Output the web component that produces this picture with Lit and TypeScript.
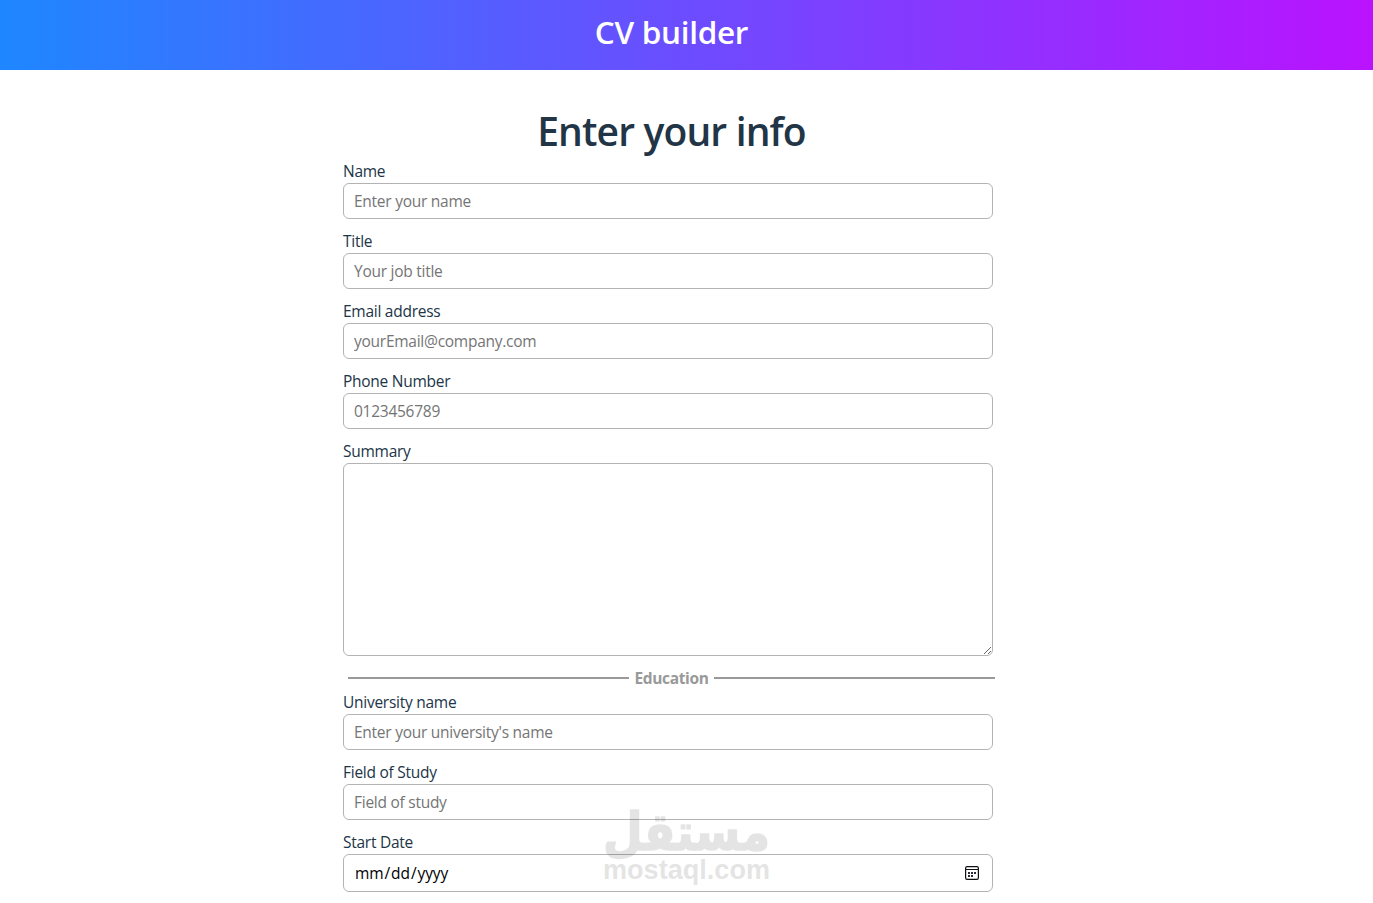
import { LitElement, html, css, nothing } from 'lit';
import { customElement, property } from 'lit/decorators.js';

interface Field {
  label: string;
  type: 'text' | 'email' | 'tel' | 'date' | 'textarea';
  placeholder?: string;
}

const PERSONAL: Field[] = [
  { label: 'Name', type: 'text', placeholder: 'Enter your name' },
  { label: 'Title', type: 'text', placeholder: 'Your job title' },
  { label: 'Email address', type: 'email', placeholder: 'yourEmail@company.com' },
  { label: 'Phone Number', type: 'tel', placeholder: '0123456789' },
  { label: 'Summary', type: 'textarea' },
];

const EDUCATION: Field[] = [
  { label: 'University name', type: 'text', placeholder: "Enter your university's name" },
  { label: 'Field of Study', type: 'text', placeholder: 'Field of study' },
  { label: 'Start Date', type: 'date' },
];

const calendarIcon = html`
  <svg class="calendar" width="14" height="14" viewBox="0 0 14 14">
    <rect x="0.6" y="0.6" width="12.8" height="12.8" rx="1.6" fill="none" stroke="#101014" stroke-width="1.2" />
    <path d="M1 3.5H13" stroke="#101014" />
    <path d="M3 6h2v2H3zM6 6h2v2H6zM9 6h2v2H9zM3 9h2v2H3zM6 9h2v2H6z" fill="#2b2b38" />
  </svg>
`;

@customElement('cv-field')
export class CvField extends LitElement {
  static styles = css`
    :host {
      display: block;
      margin-bottom: 10px;
    }
    label {
      display: block;
      height: 24px;
      line-height: 25px;
    }
    .box {
      position: relative;
      width: 650px;
    }
    .control {
      display: block;
      box-sizing: border-box;
      width: 650px;
      height: 36px;
      padding: 0 10px;
      border: 1px solid #b3b3b3;
      border-radius: 6px;
      background: #fff;
      color: #000;
      font: inherit;
      letter-spacing: inherit;
      outline: none;
    }
    .control::placeholder {
      color: #757575;
    }
    .date {
      height: 38px;
      letter-spacing: -0.1px;
    }
    .date::-webkit-calendar-picker-indicator {
      opacity: 0;
    }
    .calendar {
      position: absolute;
      right: 14px;
      top: 12px;
      pointer-events: none;
    }
    .area {
      height: 193px;
      resize: both;
    }
  `;

  @property({ attribute: false }) field!: Field;

  private _renderControl() {
    const { type, placeholder } = this.field;
    if (type === 'textarea') {
      return html`<textarea id="control" class="control area"></textarea>`;
    }
    return html`
      <input
        id="control"
        class="control ${type === 'date' ? 'date' : ''}"
        type=${type}
        placeholder=${placeholder ?? nothing}
      />
      ${type === 'date' ? calendarIcon : nothing}
    `;
  }

  protected render() {
    return html`
      <label for="control">${this.field.label}</label>
      <div class="box">${this._renderControl()}</div>
    `;
  }
}

@customElement('app-root')
export class AppRoot extends LitElement {
  static styles = css`
    :host {
      display: block;
      position: relative;
      height: 903px;
      overflow: hidden;
      background: #fff;
      color: #213547;
      font: 15.5px/24px 'Open Sans', 'Noto Sans', sans-serif;
      letter-spacing: -0.26px;
    }
    header {
      box-sizing: border-box;
      height: 70px;
      padding: 8px 30px 0 0;
      background: linear-gradient(90deg, #1e87ff, #ba12ff);
      color: #fff;
      text-align: center;
    }
    h1,
    h2 {
      margin: 0;
      font-weight: 600;
    }
    h1 {
      font-size: 31.5px;
      line-height: 48px;
      letter-spacing: -0.3px;
    }
    main {
      padding: 36px 30px 0 0;
    }
    h2 {
      font-size: 39px;
      line-height: 49px;
      letter-spacing: -0.85px;
      text-align: center;
    }
    form {
      width: 657px;
      margin: 4px auto 0;
    }
    .divider {
      display: flex;
      align-items: center;
      gap: 5px;
      height: 24px;
      padding: 0 5px;
      color: #999;
      font-weight: 700;
      letter-spacing: -0.35px;
    }
    .divider::before,
    .divider::after {
      content: '';
      flex: 1;
      height: 2px;
      background: #999;
    }
    .watermark {
      position: absolute;
      left: 600px;
      top: 785px;
      overflow: visible;
      pointer-events: none;
      opacity: 0.1;
    }
    .wordmark {
      font: 700 52px 'DejaVu Sans', sans-serif;
      letter-spacing: 0;
      stroke: #000;
      stroke-width: 1.6;
      stroke-linejoin: round;
    }
    .domain {
      font: 700 27px 'Liberation Sans', sans-serif;
      letter-spacing: 0;
    }
  `;

  private _renderWatermark() {
    return html`
      <svg class="watermark" width="175" height="110" viewBox="0 0 175 110">
        <text class="wordmark" x="86.5" y="65" text-anchor="middle" textLength="167" lengthAdjust="spacingAndGlyphs">مستقل</text>
        <text class="domain" x="3" y="94" textLength="167" lengthAdjust="spacingAndGlyphs">mostaql.com</text>
      </svg>
    `;
  }

  protected render() {
    return html`
      <header><h1>CV builder</h1></header>
      <main>
        <h2>Enter your info</h2>
        <form>
          ${PERSONAL.map((field) => html`<cv-field .field=${field}></cv-field>`)}
          <div class="divider">Education</div>
          ${EDUCATION.map((field) => html`<cv-field .field=${field}></cv-field>`)}
        </form>
      </main>
      ${this._renderWatermark()}
    `;
  }
}

declare global {
  interface HTMLElementTagNameMap {
    'cv-field': CvField;
    'app-root': AppRoot;
  }
}
